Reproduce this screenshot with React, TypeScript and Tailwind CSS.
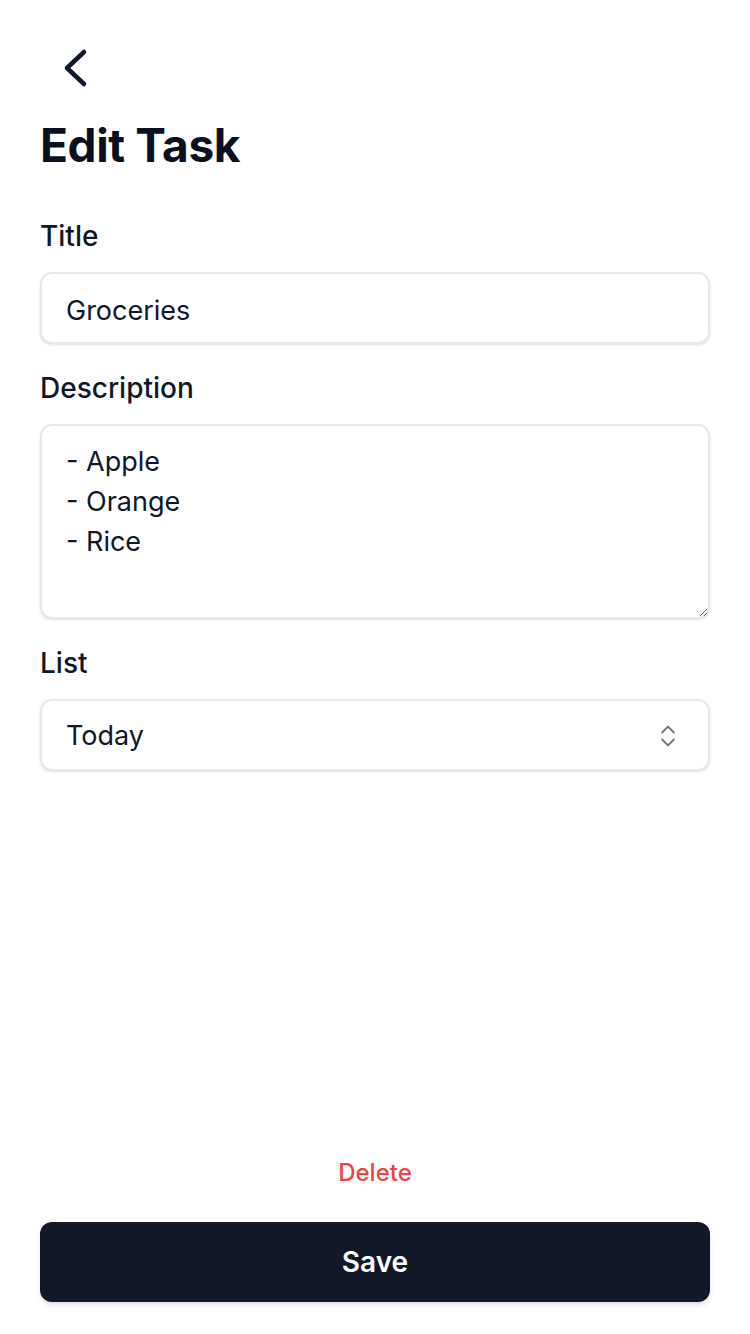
import React, { useState } from 'react';

const fieldClass =
  'w-full rounded-[12px] border-2 border-[#e2e8f0] bg-white px-[24px] text-[27px] text-[#0f172a] shadow-sm outline-none';

function BackIcon() {
  return (
    <svg width="28" height="44" viewBox="0 0 28 44" fill="none" aria-hidden>
      <polyline
        points="22,6 5,22 22,38"
        stroke="#0f172a"
        strokeWidth="4.5"
        strokeLinecap="round"
        strokeLinejoin="round"
      />
    </svg>
  );
}

function UpDownIcon() {
  return (
    <svg width="28" height="28" viewBox="0 0 24 24" fill="none" stroke="#6b7280" strokeWidth="1.6" strokeLinecap="round" strokeLinejoin="round" aria-hidden>
      <path d="m7 15 5 5 5-5" />
      <path d="m7 9 5-5 5 5" />
    </svg>
  );
}

function Label({ children }: { children: React.ReactNode }) {
  return (
    <label className="mb-[16px] block pt-[2px] text-[28px] font-medium leading-[40px] text-[#0f172a]">{children}</label>
  );
}

export default function App() {
  const [title, setTitle] = useState('Groceries');
  const [description, setDescription] = useState('- Apple\n- Orange\n- Rice');

  return (
    <div
      className="flex min-h-screen flex-col bg-white px-[40px] pb-[32px]"
      style={{ fontFamily: 'Inter, "Noto Sans", sans-serif' }}
    >
      <button className="ml-[22px] mt-[46px] w-fit" aria-label="Back">
        <BackIcon />
      </button>

      <h1 className="mt-[27px] text-[46px] font-bold leading-[56px] tracking-[-0.4px] text-[#0b1020]">Edit Task</h1>

      <div className="mt-[41px] flex flex-col gap-[22px]">
        <div>
          <Label>Title</Label>
          <input
            className={`${fieldClass} h-[72px] pt-[4px]`}
            value={title}
            onChange={(e) => setTitle(e.target.value)}
          />
        </div>

        <div>
          <Label>Description</Label>
          <textarea
            className={`${fieldClass} block h-[195px] pb-[15px] pt-[16px] leading-[40px]`}
            value={description}
            onChange={(e) => setDescription(e.target.value)}
          />
        </div>

        <div>
          <Label>List</Label>
          <button className={`${fieldClass} flex h-[72px] items-center justify-between pr-[26px] pt-[2px] text-left`}>
            <span>Today</span>
            <UpDownIcon />
          </button>
        </div>
      </div>

      <div className="mt-auto flex flex-col">
        <button className="mx-auto text-[24px] font-medium leading-[32px] text-[#ef4444]">Delete</button>
        <button className="mt-[33px] h-[80px] w-full rounded-[12px] bg-[#111827] text-[28px] font-semibold text-white shadow-md">
          Save
        </button>
      </div>
    </div>
  );
}
